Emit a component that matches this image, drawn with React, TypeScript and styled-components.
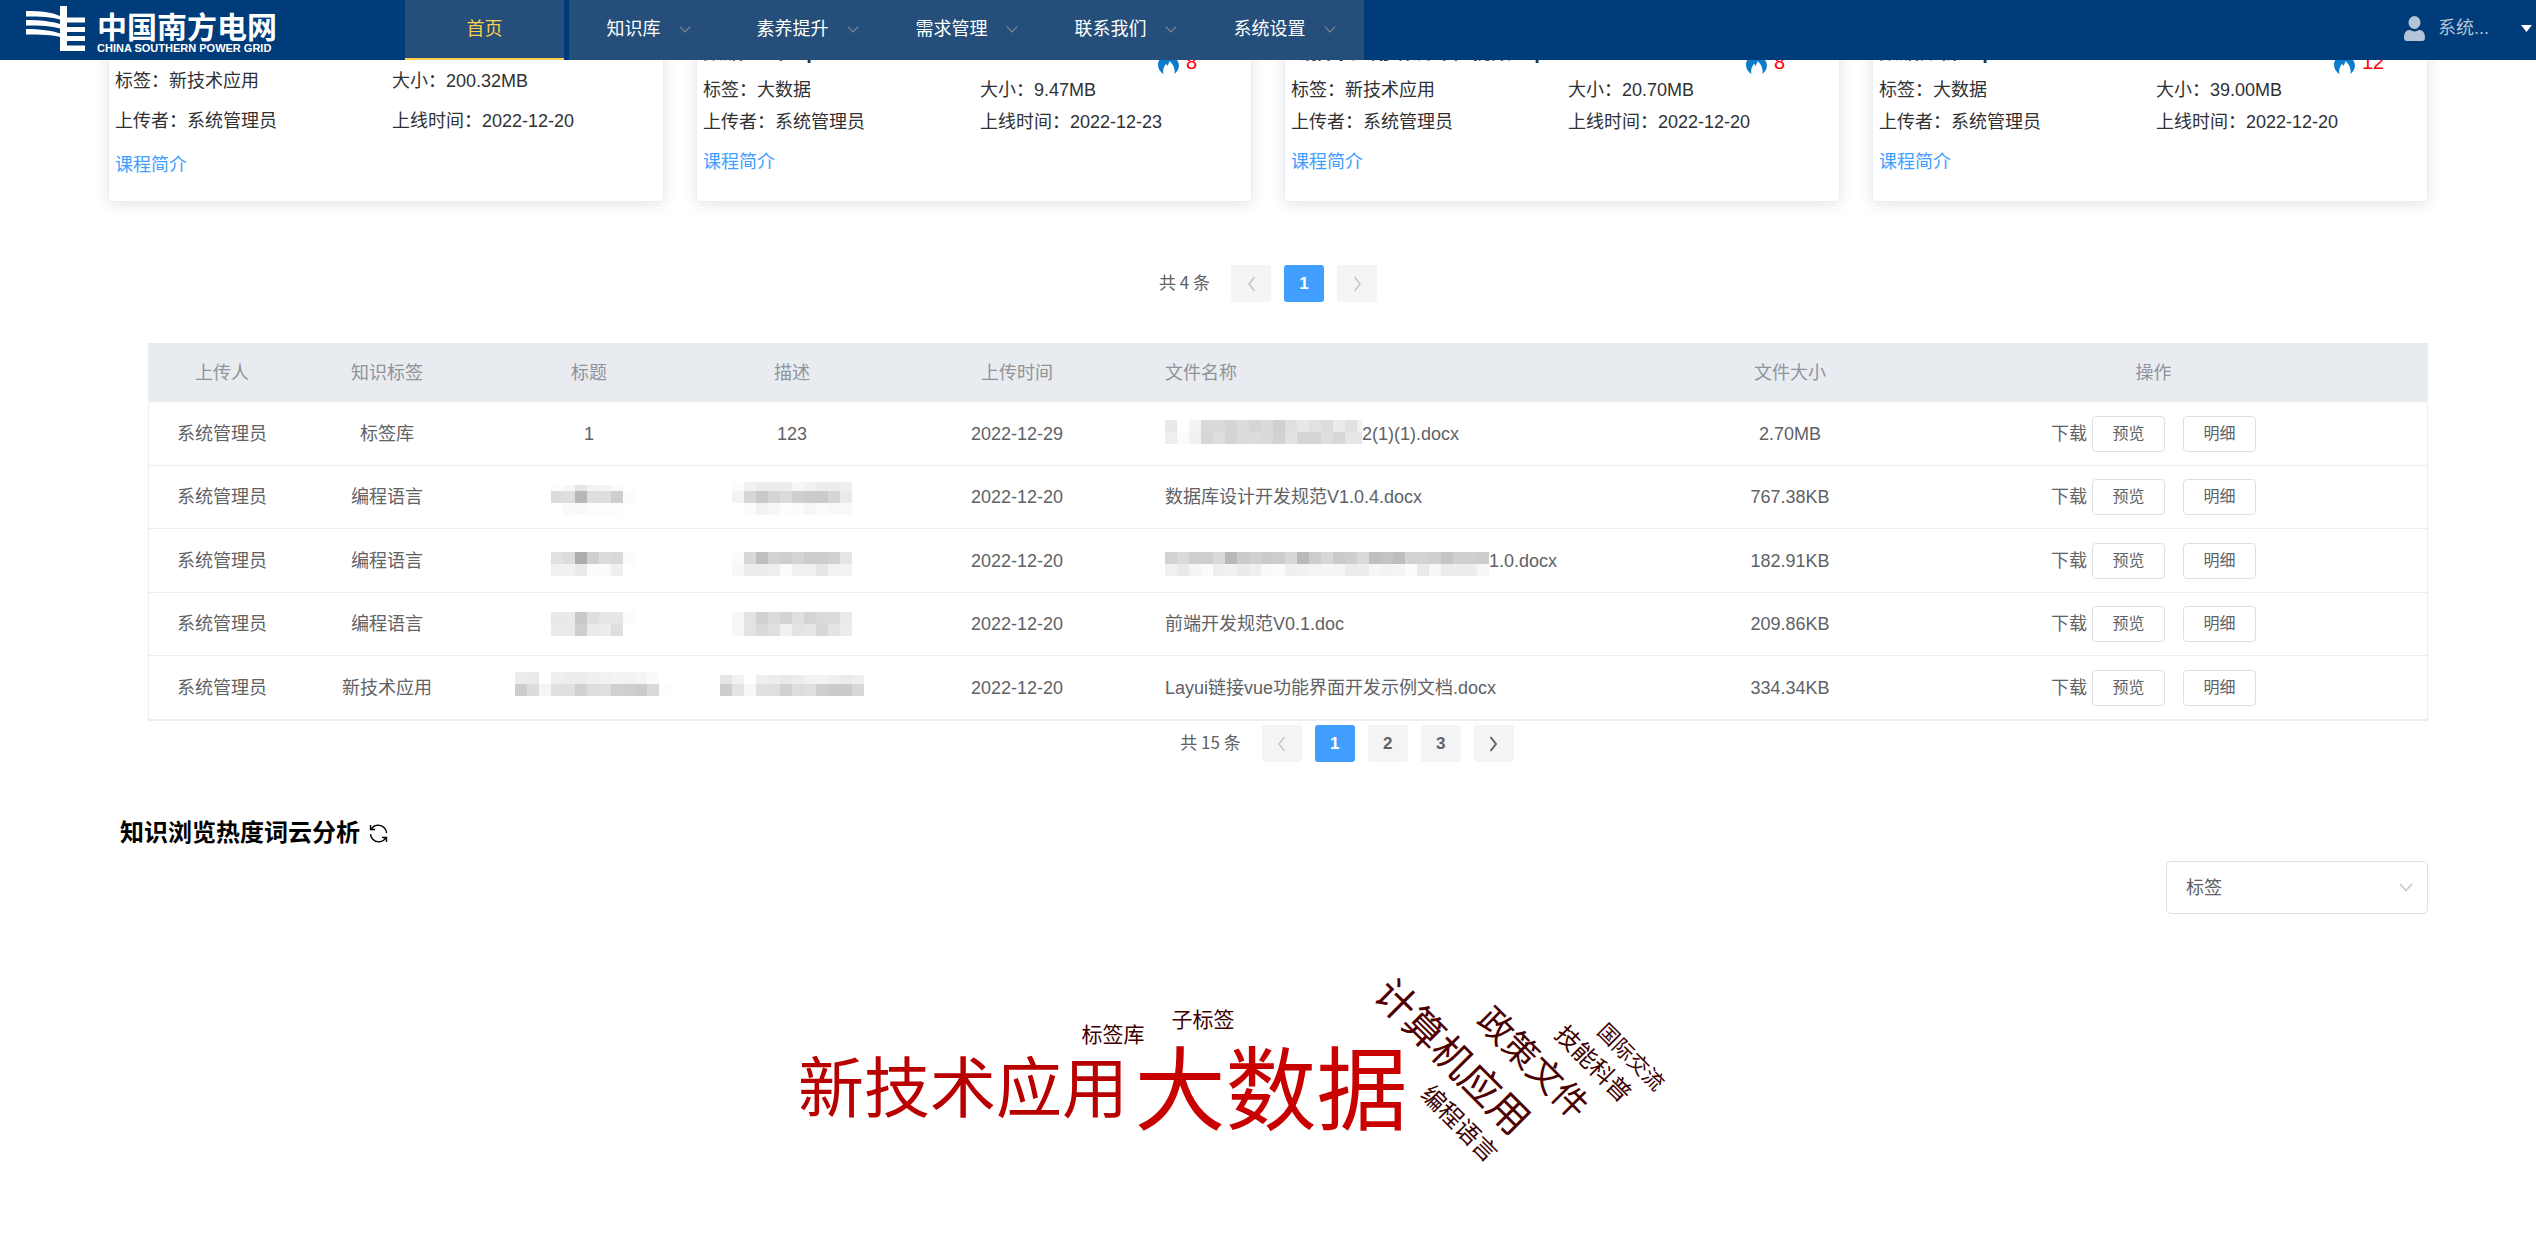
import React from "react";
import styled, { createGlobalStyle } from "styled-components";

const GlobalStyle = createGlobalStyle`
  * { box-sizing: border-box; }
  body {
    margin: 0;
    background: #fff;
    color: #303133;
    font-family: "Liberation Sans", "Noto Sans CJK SC", sans-serif;
    font-size: 18px;
    line-height: 24px;
    font-weight: 400;
  }
  a { color: inherit; text-decoration: none; }
  button, select { font-family: inherit; font-weight: inherit; line-height: inherit; cursor: pointer; }
`;

/* ---------- header ---------- */

const Header = styled.header`
  position: fixed;
  inset: 0 0 auto 0;
  z-index: 10;
  display: flex;
  height: 60px;
  background: #003c79;
`;

const Brand = styled.a`
  display: flex;
  gap: 12px;
  flex: 0 0 405px;
  padding: 6px 0 0 26px;
  color: #fff;
`;

const BrandText = styled.span`
  display: flex;
  flex-direction: column;
  padding-top: 7px;
`;

const BrandName = styled.span`
  font-size: 30px;
  line-height: 30px;
  font-weight: 700;
`;

const BrandSub = styled.span`
  font-size: 11px;
  line-height: 10px;
  font-weight: 700;
  white-space: nowrap;
`;

const Nav = styled.nav`
  display: flex;
  gap: 5px;
`;

const SubTabs = styled.div`
  display: flex;
  background: #254f7a;
`;

const Tab = styled.button<{ $active?: boolean }>`
  display: flex;
  align-items: center;
  justify-content: center;
  gap: 18px;
  width: 159px;
  height: 60px;
  padding: 0;
  border: 0;
  border-bottom: 2px solid ${(p) => (p.$active ? "#ffd04b" : "transparent")};
  background: #254f7a;
  color: ${(p) => (p.$active ? "#ffd04b" : "#fff")};
  font-size: 18px;
`;

const User = styled.button`
  display: flex;
  align-items: center;
  margin-left: auto;
  padding: 0 4px 4px 0;
  border: 0;
  background: none;
  color: #b3c5d7;
  font-size: 18px;
`;

const UserName = styled.span`
  width: 83px;
  margin-left: 13px;
  text-align: left;
`;

/* ---------- course cards ---------- */

const Page = styled.main`
  padding: 0 108px;
`;

const Cards = styled.section`
  display: grid;
  grid-template-columns: repeat(4, 1fr);
  gap: 32px;
`;

const Card = styled.article`
  display: flex;
  flex-direction: column;
  padding-bottom: 20px;
  border: 1px solid #ebeef5;
  border-radius: 5px;
  background: #fff;
  box-shadow: 0 3px 16px rgba(0, 0, 0, 0.1);
`;

const CardHead = styled.div<{ $roomy?: boolean }>`
  display: flex;
  align-items: flex-end;
  height: ${(p) => (p.$roomy ? 60 : 73)}px;
  padding: 0 6px;
`;

const CardTitle = styled.h3`
  flex: 1;
  margin: 0;
  padding-bottom: 10px;
  font-size: 20px;
  font-weight: 700;
`;

const Heat = styled.span`
  display: flex;
  gap: 7px;
  width: 87px;
  color: #f00;
  font-size: 20px;
`;

const Facts = styled.div<{ $roomy?: boolean }>`
  display: grid;
  grid-template-columns: 1fr 1fr;
  line-height: ${(p) => (p.$roomy ? 40 : 32)}px;
`;

const Fact = styled.span`
  padding-left: 6px;
`;

const Intro = styled.a`
  align-self: flex-start;
  margin-top: 8px;
  padding-left: 6px;
  color: #409eff;
  line-height: 32px;
`;

/* ---------- pagination ---------- */

const Pager = styled.nav`
  display: flex;
  justify-content: center;
  gap: 13px;
`;

const Total = styled.span`
  margin-right: 8px;
  color: #606266;
  font-family: "Noto Sans CJK SC", sans-serif;
  font-size: 17px;
  line-height: 33px;
`;

const PageButton = styled.button<{ $current?: boolean }>`
  display: flex;
  align-items: center;
  justify-content: center;
  width: 40px;
  height: 37px;
  padding: 0;
  border: 0;
  border-radius: 3px;
  background: ${(p) => (p.$current ? "#409eff" : "#f4f4f5")};
  color: ${(p) => (p.$current ? "#fff" : "#606266")};
  font-size: 17px;
  font-weight: 700;
  &:disabled { color: #c0c4cc; }
`;

const CoursePager = styled(Pager)`
  margin: 63px 0 41px;
`;

const FilePager = styled(Pager)`
  margin-top: 4px;
  padding-left: 118px;
`;

/* ---------- file table ---------- */

const FileSection = styled.section`
  padding-left: 40px;
`;

const Table = styled.table`
  width: 100%;
  table-layout: fixed;
  border-collapse: separate;
  border-spacing: 0;
  border: 1px solid #ebeef5;
  border-top: 0;
  color: #606266;
  text-align: center;
`;

const HeadCell = styled.th<{ $left?: boolean }>`
  height: 59px;
  padding: 0 16px;
  background: #e8ebf0;
  color: #909399;
  font-weight: 400;
  text-align: ${(p) => (p.$left ? "left" : "center")};
`;

const Row = styled.tr`
  height: 64px;
  &:nth-child(even) { height: 63px; }
`;

const Cell = styled.td<{ $left?: boolean }>`
  padding: 0 ${(p) => (p.$left ? 16 : 0)}px;
  border-bottom: 1px solid #ebeef5;
  text-align: ${(p) => (p.$left ? "left" : "center")};
  white-space: nowrap;
`;

const CellContent = styled.div<{ $left?: boolean }>`
  display: flex;
  align-items: center;
  justify-content: ${(p) => (p.$left ? "flex-start" : "center")};
`;

const RowButton = styled.button`
  width: 73px;
  height: 36px;
  margin-left: 5px;
  padding: 0;
  border: 1px solid #dcdfe6;
  border-radius: 4px;
  background: #fff;
  color: #606266;
  font-size: 16px;
  & + & { margin-left: 18px; }
`;

/* ---------- word cloud ---------- */

const CloudTitle = styled.h2`
  display: flex;
  align-items: center;
  gap: 9px;
  margin: 53px 0 10px;
  padding-left: 12px;
  color: #000;
  font-size: 24px;
  line-height: 36px;
  font-weight: 700;
`;

const IconButton = styled.button`
  display: flex;
  padding: 0;
  border: 0;
  background: none;
  color: #000;
`;

const SelectBox = styled.label`
  position: relative;
  display: block;
  width: 262px;
  margin-left: auto;
  svg {
    position: absolute;
    top: 22px;
    right: 15px;
    pointer-events: none;
  }
`;

const Select = styled.select`
  display: block;
  width: 100%;
  height: 53px;
  padding: 0 40px 0 19px;
  border: 1px solid #dcdfe6;
  border-radius: 5px;
  appearance: none;
  background: #fff;
  color: #606266;
  font-size: 18px;
`;

const Cloud = styled.div`
  position: relative;
  width: 936px;
  height: 320px;
  margin: 0 auto;
`;

const Word = styled.span<{ $x: number; $y: number; $size: number; $color: string; $tilt?: boolean }>`
  position: absolute;
  left: ${(p) => p.$x}px;
  top: ${(p) => p.$y}px;
  transform: translate(-50%, -50%) rotate(${(p) => (p.$tilt ? 45 : 0)}deg);
  color: ${(p) => p.$color};
  font-size: ${(p) => p.$size}px;
  line-height: 1;
  white-space: nowrap;
`;

/* ---------- drawings ---------- */

const Chevron = ({ dir, w = 14, color = "currentColor", stroke = 1.5 }: { dir: "down" | "left" | "right"; w?: number; color?: string; stroke?: number }) => {
  const d = { down: "M1 1l6 6.5 6-6.5", left: "M7.500 1L2 8l5.500 7", right: "M1.500 1L7 8l-5.500 7" }[dir];
  const down = dir === "down";
  return (
    <svg width={down ? w : 9} height={down ? 9 : 16} viewBox={down ? "0 0 14 9" : "0 0 9 16"} fill="none" stroke={color} strokeWidth={stroke} aria-hidden="true">
      <path d={d} />
    </svg>
  );
};

const LogoMark = () => (
  <svg width="59" height="46" viewBox="0 0 59 46" fill="#fff" aria-hidden="true">
    <path d="M0 5C14 5 26 6 34 10V0h7v11.500h18v5H41V21h18v5H41v4h18v5H41v4.500h18V45H34V31C27 29 15 28.500 0 28.500V23c14 0 26 1.500 34 4.500v-5C26 20 14 19.500 0 19.500V14c14 0 26 1.500 34 4v-4.500C26 11 14 10.500 0 10.500Z" />
  </svg>
);

const UserIcon = () => (
  <svg width="21" height="25" viewBox="0 0 21 25" fill="#b3c5d7" aria-hidden="true">
    <ellipse cx="10.500" cy="6.500" rx="6" ry="6.500" />
    <path d="M0 22c0-5 2-8 5.500-8 1.500 0 3 1.500 5 1.500s3.500-1.500 5-1.500C19 14 21 17 21 22c0 2-1 3-3 3H3c-2 0-3-1-3-3Z" />
  </svg>
);

const Flame = () => (
  <svg width="21" height="24" viewBox="0 0 21 24" fill="#0a7cc8" aria-hidden="true">
    <path d="M10 0c1 5 10 7 11 15 0 4-2 7-4.500 9 1-5-1.500-10-5-13-.5 2-1 3-2 5-.7-.8-1-1.500-1.200-2.500C5.500 17 4.500 20 5.500 24 2 22 0 18.500 0 15c0-5 3-7 5-11l1.500 3C8 5 9.500 3 10 0Z" />
  </svg>
);

const RefreshIcon = () => (
  <svg width="19" height="19" viewBox="0 0 19 19" fill="none" stroke="currentColor" strokeWidth="1.400" aria-hidden="true">
    <path d="M1.500 1v4.500H6M2 5.500C5 0 12 0 15.500 4c1.500 1.700 2 3 2 5M17.500 18v-4.500H13M17 13.500c-3 5.500-10 5.500-13.500 1.500-1.500-1.700-2-3-2-5" />
  </svg>
);

const TILE = 12;

type MosaicProps = { rows: string[]; top: number; lead?: number; trim?: number; width?: number };

/* Each row is a list of two-digit hex greys, one per tile; trim cuts the top of the first row. */
const Mosaic = ({ rows, top, lead = 0, trim = 0, width }: MosaicProps) => {
  const tiles = rows.map((r) => r.split(" "));
  const full = Math.max(...tiles.map((r) => r.length)) * TILE + lead;
  return (
    <svg width={width ?? full} height="36" aria-hidden="true" shapeRendering="crispEdges">
      {tiles.map((row, y) =>
        row.map((g, x) => {
          const cut = y === 0 ? trim : 0;
          return (
            <rect key={`${x}-${y}`} x={lead + x * TILE} y={top + y * TILE + cut} width={TILE} height={TILE - cut} fill={`#${g}${g}${g}`} />
          );
        })
      )}
    </svg>
  );
};

/* ---------- data ---------- */

const menus = ["知识库", "素养提升", "需求管理", "联系我们", "系统设置"];

const courses = [
  { title: "", heat: "", tag: "新技术应用", size: "200.32MB", date: "2022-12-20", roomy: true },
  { title: "数据基础.mp4", heat: "8", tag: "大数据", size: "9.47MB", date: "2022-12-23" },
  { title: "新技术应用培训课程视频.mp4", heat: "8", tag: "新技术应用", size: "20.70MB", date: "2022-12-20" },
  { title: "数据分析.mp4", heat: "12", tag: "大数据", size: "39.00MB", date: "2022-12-20" },
];

const columns: { label: string; width?: number; left?: boolean }[] = [
  { label: "上传人", width: 146 },
  { label: "知识标签", width: 184 },
  { label: "标题", width: 220 },
  { label: "描述", width: 186 },
  { label: "上传时间", width: 264 },
  { label: "文件名称", left: true },
  { label: "文件大小", width: 180 },
  { label: "操作", width: 547 },
];

type FileRow = { tag: string; title: React.ReactNode; desc: React.ReactNode; date: string; mask?: React.ReactNode; file: string; size: string };

const files: FileRow[] = [
  {
    tag: "标签库", title: "1", desc: "123", date: "2022-12-29", file: "2(1)(1).docx", size: "2.70MB",
    mask: <Mosaic top={4} width={197} rows={[
      "e9 ff f3 d9 da d5 dc d5 da d0 e0 e7 e1 dc ea e1 f1",
      "ee fb f1 d6 dd d4 db dc da d2 e2 d5 d5 de d8 e6 e6",
    ]} />,
  },
  {
    tag: "编程语言", date: "2022-12-20", file: "数据库设计开发规范V1.0.4.docx", size: "767.38KB",
    title: <Mosaic top={0} trim={6} lead={8} rows={["fd f7 e5 f2 f5 fa ff", "dc de b7 de de ce fb", "ff fa f9 fd fd fd ff"]} />,
    desc: <Mosaic top={0} trim={3} rows={["fc f1 eb ec ed f7 f1 ec ed ef", "f3 d6 c9 d4 db cf cc cb d5 ea", "ff fc f3 f7 fd fb f6 fb f9 f9"]} />,
  },
  {
    tag: "编程语言", date: "2022-12-20", file: "1.0.docx", size: "182.91KB",
    title: <Mosaic top={9} lead={8} rows={["e1 dc ac cf dc d9 fb", "f1 f1 ea fb fb ef ff"]} />,
    desc: <Mosaic top={9} rows={["fb d8 bf d2 ce d4 cd cc d0 e5", "f8 ed ed ee fb f0 f0 e6 f2 f3"]} />,
    mask: <Mosaic top={9} rows={[
      "d2 da ce cf d9 b8 cb d0 cb cc d7 b9 cc d7 ca ce da bf c3 be d2 d2 cf c5 cf cf cc",
      "f0 e9 f4 fb ee f2 ea ef fa fb ef f2 f4 f6 f5 ec ec f6 f3 f5 fc ea f7 ec ed ed f6",
    ]} />,
  },
  {
    tag: "编程语言", date: "2022-12-20", file: "前端开发规范V0.1.doc", size: "209.86KB",
    title: <Mosaic top={6} lead={8} rows={["e9 e9 c9 df e6 e6 fb", "ea e9 ce eb ec df ff"]} />,
    desc: <Mosaic top={6} rows={["f6 e3 d1 db d3 e0 d4 da db ea", "f6 e3 da df f1 e3 e6 d7 e3 ec"]} />,
  },
  {
    tag: "新技术应用", date: "2022-12-20", file: "Layui链接vue功能界面开发示例文档.docx", size: "334.34KB",
    title: <Mosaic top={2} lead={8} rows={["ec ea ff ef ed ec ef f2 f4 f2 f5 fa ff", "cd dc f5 e0 df d1 dd df d0 cf cb d9 fc"]} />,
    desc: <Mosaic top={2} trim={3} rows={["e6 f2 ff ef ec e9 ed f2 f3 ef eb ee", "cd e4 f8 e0 df d1 dd df cf cb cb d8"]} />,
  },
];

const words = [
  { text: "新技术应用", x: 163, y: 175, size: 66, color: "#b90000" },
  { text: "大数据", x: 471, y: 177, size: 91, color: "#c80000" },
  { text: "标签库", x: 313, y: 120, size: 21, color: "#3c0000" },
  { text: "子标签", x: 403, y: 105, size: 21, color: "#3c0000" },
  { text: "计算机应用", x: 652, y: 143, size: 40, color: "#500000", tilt: true },
  { text: "政策文件", x: 733, y: 149, size: 35, color: "#460000", tilt: true },
  { text: "编程语言", x: 659, y: 210, size: 24, color: "#3c0000", tilt: true },
  { text: "技能科普", x: 793, y: 150, size: 24, color: "#3c0000", tilt: true },
  { text: "国际交流", x: 831, y: 143, size: 21, color: "#3c0000", tilt: true },
];

export default function App() {
  return (
    <>
      <GlobalStyle />
      <Header>
        <Brand href="#">
          <LogoMark />
          <BrandText>
            <BrandName>中国南方电网</BrandName>
            <BrandSub>CHINA SOUTHERN POWER GRID</BrandSub>
          </BrandText>
        </Brand>
        <Nav>
          <Tab $active>首页</Tab>
          <SubTabs>
            {menus.map((m) => (
              <Tab key={m}>
                {m}
                <Chevron dir="down" w={12} color="#909399" stroke={1.2} />
              </Tab>
            ))}
          </SubTabs>
        </Nav>
        <User>
          <UserIcon />
          <UserName>系统...</UserName>
          <svg width="11" height="7" viewBox="0 0 11 7" fill="#fff" aria-hidden="true"><path d="M0 0h11L5.500 7Z" /></svg>
        </User>
      </Header>

      <Page>
        <Cards>
          {courses.map((c, i) => (
            <Card key={i}>
              <CardHead $roomy={c.roomy}>
                {c.title && <CardTitle>{c.title}</CardTitle>}
                {c.heat && <Heat><Flame />{c.heat}</Heat>}
              </CardHead>
              <Facts $roomy={c.roomy}>
                <Fact>标签：{c.tag}</Fact>
                <Fact>大小：{c.size}</Fact>
                <Fact>上传者：系统管理员</Fact>
                <Fact>上线时间：{c.date}</Fact>
              </Facts>
              <Intro href="#">课程简介</Intro>
            </Card>
          ))}
        </Cards>

        <CoursePager aria-label="课程分页">
          <Total>共 4 条</Total>
          <PageButton disabled aria-label="上一页"><Chevron dir="left" /></PageButton>
          <PageButton $current>1</PageButton>
          <PageButton disabled aria-label="下一页"><Chevron dir="right" /></PageButton>
        </CoursePager>

        <FileSection>
          <Table>
            <colgroup>
              {columns.map((c) => <col key={c.label} width={c.width} />)}
            </colgroup>
            <thead>
              <tr>{columns.map((c) => <HeadCell key={c.label} $left={c.left}>{c.label}</HeadCell>)}</tr>
            </thead>
            <tbody>
              {files.map((f, i) => (
                <Row key={i}>
                  <Cell>系统管理员</Cell>
                  <Cell>{f.tag}</Cell>
                  <Cell><CellContent>{f.title}</CellContent></Cell>
                  <Cell><CellContent>{f.desc}</CellContent></Cell>
                  <Cell>{f.date}</Cell>
                  <Cell $left><CellContent $left>{f.mask}{f.file}</CellContent></Cell>
                  <Cell>{f.size}</Cell>
                  <Cell>
                    <CellContent>
                      <a href="#">下载</a>
                      <RowButton>预览</RowButton>
                      <RowButton>明细</RowButton>
                    </CellContent>
                  </Cell>
                </Row>
              ))}
            </tbody>
          </Table>
          <FilePager aria-label="文件分页">
            <Total>共 15 条</Total>
            <PageButton disabled aria-label="上一页"><Chevron dir="left" /></PageButton>
            <PageButton $current>1</PageButton>
            <PageButton>2</PageButton>
            <PageButton>3</PageButton>
            <PageButton aria-label="下一页"><Chevron dir="right" stroke={2} /></PageButton>
          </FilePager>
        </FileSection>

        <section>
          <CloudTitle>
            知识浏览热度词云分析
            <IconButton aria-label="刷新"><RefreshIcon /></IconButton>
          </CloudTitle>
          <SelectBox>
            <Select aria-label="词云类型" defaultValue="tag">
              <option value="tag">标签</option>
            </Select>
            <Chevron dir="down" color="#c0c4cc" />
          </SelectBox>
          <Cloud>
            {words.map((w) => (
              <Word key={w.text} $x={w.x} $y={w.y} $size={w.size} $color={w.color} $tilt={w.tilt}>{w.text}</Word>
            ))}
          </Cloud>
        </section>
      </Page>
    </>
  );
}
